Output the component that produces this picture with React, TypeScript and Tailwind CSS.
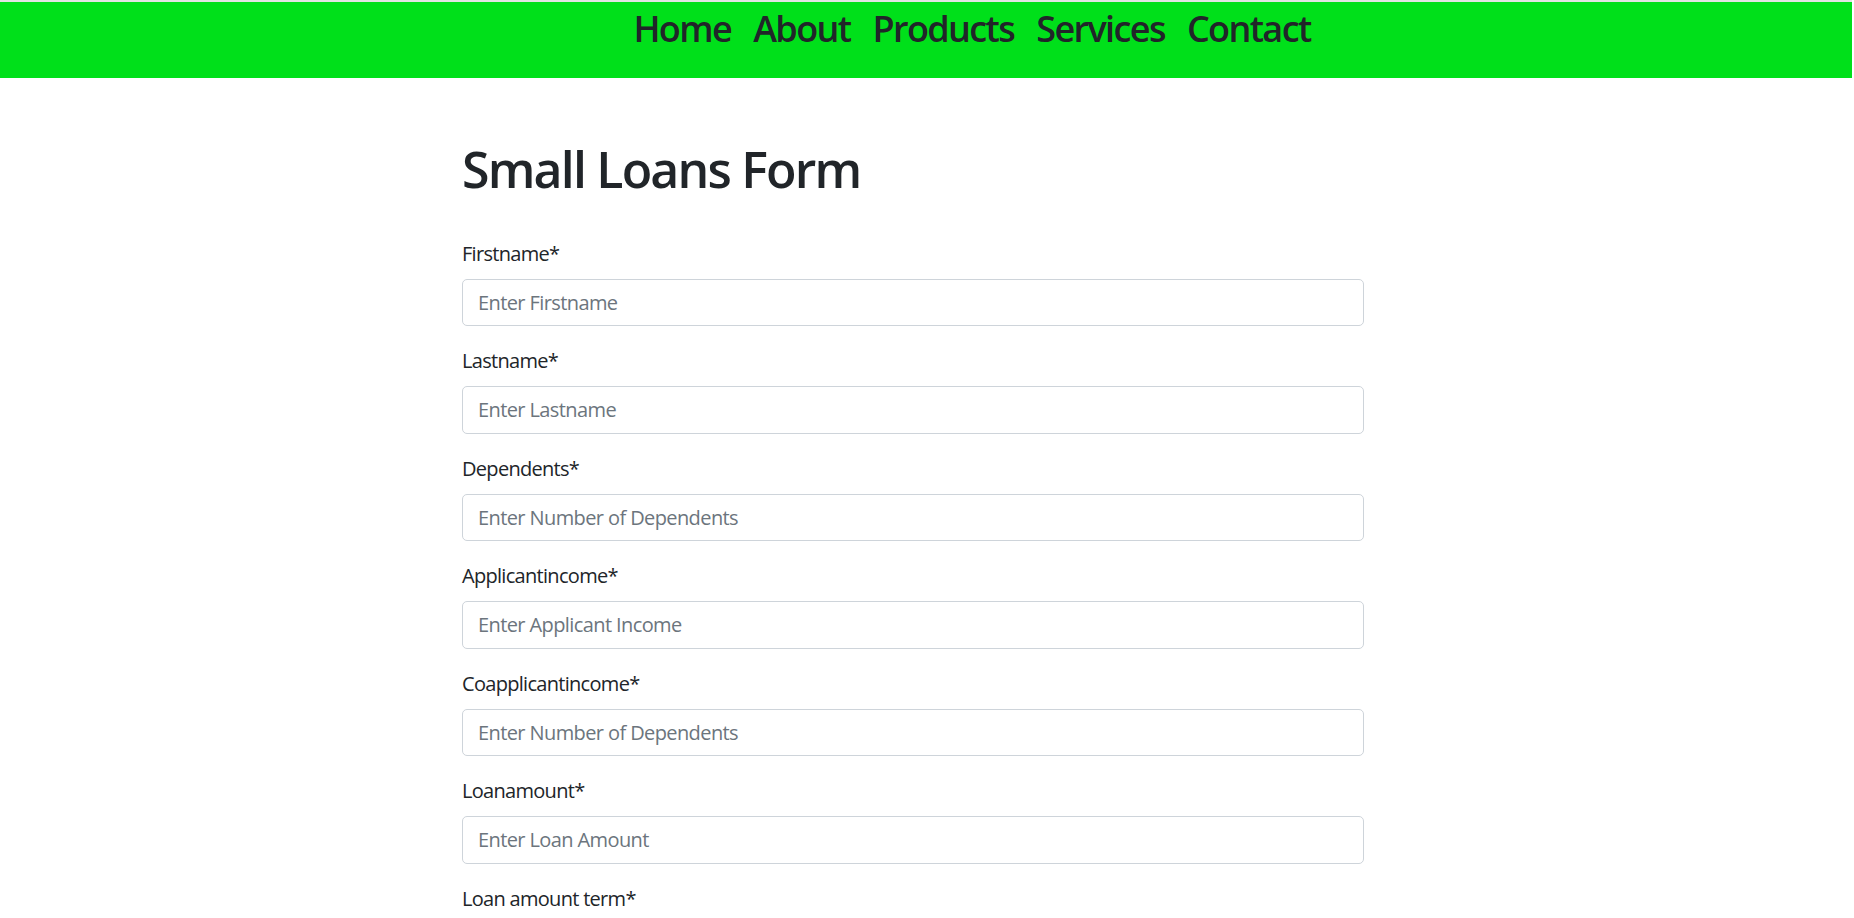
const navItems = ["Home", "About", "Products", "Services", "Contact"];

const fields = [
  { label: "Firstname*", placeholder: "Enter Firstname" },
  { label: "Lastname*", placeholder: "Enter Lastname" },
  { label: "Dependents*", placeholder: "Enter Number of Dependents" },
  { label: "Applicantincome*", placeholder: "Enter Applicant Income" },
  { label: "Coapplicantincome*", placeholder: "Enter Number of Dependents" },
  { label: "Loanamount*", placeholder: "Enter Loan Amount" },
  { label: "Loan amount term*", placeholder: "Enter Loan Amount Term" },
];

function Field({ label, placeholder }: { label: string; placeholder: string }) {
  return (
    <div className="mb-[20px]">
      <label className="block mb-[10px] text-[20px] leading-[30px] tracking-[-0.7px] text-[#212529]">
        {label}
      </label>
      <input
        type="text"
        placeholder={placeholder}
        className="block w-full h-[47.5px] px-[15px] text-[20px] tracking-[-0.6px] text-[#212529] bg-white border border-[#ced4da] rounded-[5px] placeholder:text-[#6c757d] outline-none"
      />
    </div>
  );
}

export default function App() {
  return (
    <div className="min-h-screen bg-white font-['Open_Sans','Noto_Sans',sans-serif]">
      <div className="border-t-2 border-[#e3e3e3] w-[1852px]">
        <nav className="h-[76px] bg-[#00e01a]">
          <ul className="flex justify-center gap-[22px] pl-[92px] pt-[3px]">
            {navItems.map((item) => (
              <li
                key={item}
                className="text-[36px] leading-[48px] font-semibold tracking-[-1.6px] text-[#212529] cursor-pointer"
              >
                {item}
              </li>
            ))}
          </ul>
        </nav>
      </div>

      <div className="ml-[462px] w-[902px] pt-[61px] pb-[40px]">
        <h1 className="text-[50px] leading-[60px] font-semibold tracking-[-1.8px] text-[#212529] mb-[39.5px]">
          Small Loans Form
        </h1>
        <form>
          {fields.map((f) => (
            <Field key={f.label} label={f.label} placeholder={f.placeholder} />
          ))}
          <button
            type="button"
            className="mt-[10px] px-[15px] h-[47.5px] text-[20px] text-white bg-[#0d6efd] rounded-[5px]"
          >
            Submit
          </button>
        </form>
      </div>
    </div>
  );
}
